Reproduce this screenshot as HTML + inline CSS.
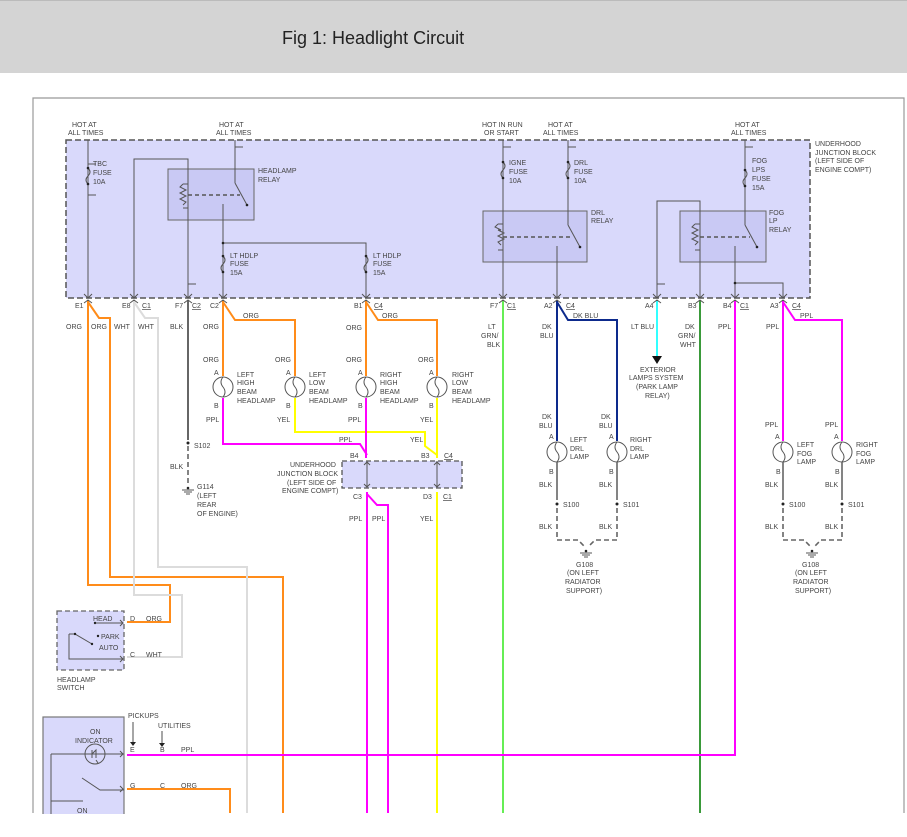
<!DOCTYPE html>
<html><head><meta charset="utf-8"><style>
html,body{margin:0;padding:0;background:#fff;width:907px;height:837px;overflow:hidden}
#hdr{position:absolute;left:0;top:0;width:907px;height:73px;background:#d4d4d4;border-top:1px solid #bbb;box-sizing:border-box}
#hdr span{position:absolute;left:282px;top:27px;font:18px "Liberation Sans",sans-serif;color:#222}
svg{position:absolute;left:0;top:0}
text{font-family:"Liberation Sans",sans-serif;font-size:7px;fill:#444}
</style></head><body>
<div id="hdr"><span>Fig 1: Headlight Circuit</span></div>
<svg width="907" height="837" viewBox="0 0 907 837">
<!-- outer frame -->
<polyline points="33,813 33,98 904,98 904,813" fill="none" stroke="#999" stroke-width="1.2"/>
<!-- underhood block -->
<rect x="66" y="140" width="744" height="158" fill="#d9d9fb" stroke="#555" stroke-width="1.5" stroke-dasharray="6,3"/>
<!-- relay boxes -->
<rect x="168" y="169" width="86" height="51" fill="#c9c9f4" stroke="#666"/>
<rect x="483" y="211" width="104" height="51" fill="#c9c9f4" stroke="#666"/>
<rect x="680" y="211" width="86" height="51" fill="#c9c9f4" stroke="#666"/>

<g stroke="#555" stroke-width="1" fill="none">
<!-- TBC -->
<line x1="88" y1="140" x2="88" y2="298"/>
<path d="M88,164 h8 M88,195 h8"/>
<path d="M88,168 q4,4 0,8 q-4,4 0,8"/>
<!-- E8 -->
<polyline points="134,298 134,159 188,159 188,169"/>
<!-- headlamp relay -->
<line x1="188" y1="169" x2="188" y2="298"/>
<line x1="235" y1="140" x2="235" y2="169"/><path d="M235,147 h8"/>
<line x1="235" y1="169" x2="235" y2="183"/><line x1="235" y1="183" x2="247" y2="205"/>
<path d="M183,184 l-3,3 l6,3 l-6,3 l6,3 l-6,3 l6,3 l-3,3 M183,184 h5 M183,208 h5 M188,184 v24"/>
<line x1="188" y1="195" x2="240" y2="195" stroke-dasharray="4,3" stroke-width="1.4"/>
<polyline points="223,204 223,243 366,243 366,298"/>
<line x1="223" y1="243" x2="223" y2="298"/>
<path d="M223,256 q4,4 0,8 q-4,4 0,8 M366,256 q4,4 0,8 q-4,4 0,8"/>
<path d="M188,284 h8"/>
<!-- DRL/IGNE -->
<line x1="503" y1="140" x2="503" y2="298"/><path d="M503,147 h8"/>
<path d="M503,162 q4,4 0,8 q-4,4 0,8"/>
<line x1="568" y1="140" x2="568" y2="225"/><path d="M568,147 h8"/>
<path d="M568,162 q4,4 0,8 q-4,4 0,8"/>
<line x1="568" y1="225" x2="580" y2="247"/>
<path d="M498,224 l-3,3 l6,3 l-3,0 l6,3 l-6,3 l6,3 l-6,3 l3,3 M498,224 h5 M498,250 h5"/>
<line x1="503" y1="237" x2="573" y2="237" stroke-dasharray="4,3" stroke-width="1.4"/>
<line x1="557" y1="246" x2="557" y2="298"/>
<!-- fog -->
<polyline points="657,298 657,201 700,201 700,298"/><path d="M657,284 h8"/>
<line x1="745" y1="140" x2="745" y2="225"/><path d="M745,147 h8"/>
<path d="M745,170 q4,4 0,8 q-4,4 0,8"/>
<line x1="745" y1="225" x2="757" y2="247"/>
<path d="M695,224 l-3,3 l6,3 l-6,3 l6,3 l-6,3 l6,3 l-3,3 M695,224 h5 M695,250 h5"/>
<line x1="700" y1="237" x2="750" y2="237" stroke-dasharray="4,3" stroke-width="1.4"/>
<polyline points="735,246 735,283 783,283 783,298"/><line x1="735" y1="283" x2="735" y2="298"/>
</g>
<g fill="#222">
<circle cx="88" cy="168" r="1.3"/><circle cx="88" cy="184" r="1.3"/>
<circle cx="223" cy="243" r="1.3"/><circle cx="223" cy="256" r="1.3"/><circle cx="223" cy="272" r="1.3"/>
<circle cx="366" cy="256" r="1.3"/><circle cx="366" cy="272" r="1.3"/>
<circle cx="503" cy="162" r="1.3"/><circle cx="503" cy="178" r="1.3"/><circle cx="568" cy="162" r="1.3"/><circle cx="568" cy="178" r="1.3"/>
<circle cx="745" cy="170" r="1.3"/><circle cx="745" cy="186" r="1.3"/><circle cx="735" cy="283" r="1.3"/>
<circle cx="247" cy="205" r="1.3"/><circle cx="580" cy="247" r="1.3"/><circle cx="757" cy="247" r="1.3"/>
</g>

<!-- colored wires -->
<g fill="none" stroke-width="2">
<polyline stroke="#ff8c1a" points="88,300 88,585 170,585 170,622 127,622"/>
<polyline stroke="#ff8c1a" points="88,302 99,318 110,318 110,577 283,577 283,813"/>
<polyline stroke="#dcdcdc" points="134,300 134,595 182,595 182,657 127,657"/>
<polyline stroke="#dcdcdc" points="134,302 145,318 158,318 158,567 247,567 247,813"/>
<line stroke="#666" x1="188" y1="300" x2="188" y2="440"/>
<polyline stroke="#ff8c1a" points="223,300 223,376"/>
<polyline stroke="#ff8c1a" points="223,302 235,320 295,320 295,376"/>
<polyline stroke="#ff8c1a" points="366,300 366,376"/>
<polyline stroke="#ff8c1a" points="366,302 378,320 437,320 437,376"/>
<polyline stroke="#ff00ff" points="223,398 223,444 360,444 367,455"/>
<polyline stroke="#ffff00" points="295,398 295,432 425,432 425,446 437,455"/>
<line stroke="#ff00ff" x1="366" y1="398" x2="366" y2="458"/>
<line stroke="#ffff00" x1="437" y1="398" x2="437" y2="458"/>
<line stroke="#ff00ff" x1="367" y1="492" x2="367" y2="813"/>
<polyline stroke="#ff00ff" points="367,494 377,505 388,505 388,813"/>
<line stroke="#ffff00" x1="437" y1="492" x2="437" y2="813"/>
<line stroke="#66ee55" x1="503" y1="300" x2="503" y2="813"/>
<line stroke="#0d2a8c" x1="557" y1="300" x2="557" y2="441"/>
<polyline stroke="#0d2a8c" points="557,302 568,320 617,320 617,441"/>
<line stroke="#33ffff" x1="657" y1="300" x2="657" y2="356"/>
<line stroke="#3a9a3a" x1="700" y1="300" x2="700" y2="813"/>
<polyline stroke="#ff00ff" points="735,300 735,755 127,755"/>
<line stroke="#ff00ff" x1="783" y1="300" x2="783" y2="441"/>
<polyline stroke="#ff00ff" points="783,302 795,320 842,320 842,441"/>
<polyline stroke="#ff8c1a" points="127,789 230,789 230,813"/>
</g>
<polygon points="652,356 662,356 657,364" fill="#111"/>

<!-- connector dashes bottom of block -->
<g fill="none" stroke="#555" stroke-width="1">
<path d="M84,294 l4,4 l4,-4 M130,294 l4,4 l4,-4 M184,294 l4,4 l4,-4 M219,294 l4,4 l4,-4 M362,294 l4,4 l4,-4 M499,294 l4,4 l4,-4 M553,294 l4,4 l4,-4 M653,294 l4,4 l4,-4 M696,294 l4,4 l4,-4 M731,294 l4,4 l4,-4 M779,294 l4,4 l4,-4"/>
<path d="M84,303 l4,-3 l4,3 M130,303 l4,-3 l4,3 M184,303 l4,-3 l4,3 M219,303 l4,-3 l4,3 M362,303 l4,-3 l4,3 M499,303 l4,-3 l4,3 M553,303 l4,-3 l4,3 M653,303 l4,-3 l4,3 M696,303 l4,-3 l4,3 M731,303 l4,-3 l4,3 M779,303 l4,-3 l4,3"/>
</g>

<!-- lamps -->
<g fill="none" stroke="#555" stroke-width="1">
<circle cx="223" cy="387" r="10"/><circle cx="295" cy="387" r="10"/><circle cx="366" cy="387" r="10"/><circle cx="437" cy="387" r="10"/>
<circle cx="557" cy="452" r="10"/><circle cx="617" cy="452" r="10"/><circle cx="783" cy="452" r="10"/><circle cx="842" cy="452" r="10"/>
<path d="M223,377 q-4,5 0,10 q4,5 0,10 M295,377 q-4,5 0,10 q4,5 0,10 M366,377 q-4,5 0,10 q4,5 0,10 M437,377 q-4,5 0,10 q4,5 0,10"/>
<path d="M557,442 q-4,5 0,10 q4,5 0,10 M617,442 q-4,5 0,10 q4,5 0,10 M783,442 q-4,5 0,10 q4,5 0,10 M842,442 q-4,5 0,10 q4,5 0,10"/>
</g>
<g stroke="#666" stroke-width="1.6" fill="none">
<line x1="557" y1="462" x2="557" y2="500"/><line x1="617" y1="462" x2="617" y2="500"/>
<line x1="783" y1="462" x2="783" y2="500"/><line x1="842" y1="462" x2="842" y2="500"/>
<g stroke-dasharray="5,3"><polyline points="557,508 557,540 578,540 585,547"/><polyline points="617,508 617,540 595,540 588,547"/>
<polyline points="783,508 783,540 804,540 811,547"/><polyline points="842,508 842,540 821,540 814,547"/>
<line x1="188" y1="446" x2="188" y2="484"/></g>
</g>
<g fill="#222"><circle cx="557" cy="504" r="1.5"/><circle cx="617" cy="504" r="1.5"/><circle cx="783" cy="504" r="1.5"/><circle cx="842" cy="504" r="1.5"/><circle cx="188" cy="443" r="1.5"/><circle cx="586" cy="551" r="1.3"/><circle cx="812" cy="551" r="1.3"/><circle cx="188" cy="488" r="1.3"/></g>
<g stroke="#555" stroke-width="1"><path d="M580,553 h12 M582,555 h8 M584,557 h4 M806,553 h12 M808,555 h8 M810,557 h4 M182,490 h12 M184,492 h8 M186,494 h4"/></g>

<!-- small junction block -->
<rect x="342" y="461" width="120" height="27" fill="#d9d9fb" stroke="#555" stroke-width="1.3" stroke-dasharray="5,3"/>
<path d="M367,461 v27 M437,461 v27 M364,465 l3,-3 l3,3 M364,484 l3,3 l3,-3 M434,465 l3,-3 l3,3 M434,484 l3,3 l3,-3" stroke="#555" fill="none"/>

<!-- headlamp switch -->
<rect x="57" y="611" width="67" height="59" fill="#d9d9fb" stroke="#666" stroke-width="1.3" stroke-dasharray="5,3"/>
<g stroke="#555" fill="none"><path d="M95,623 h28 M69,634 v25 h54 M69,634 h6 l17,10"/><path d="M120,620 l3,3 l-3,3 M120,656 l3,3 l-3,3"/></g>
<g fill="#222"><circle cx="95" cy="623" r="1.2"/><circle cx="75" cy="634" r="1.2"/><circle cx="92" cy="644" r="1.2"/><circle cx="98" cy="636" r="1.2"/></g>
<!-- bottom switch box -->
<rect x="43" y="717" width="81" height="100" fill="#d9d9fb" stroke="#777" stroke-width="1.2"/>
<g stroke="#555" fill="none"><circle cx="95" cy="754" r="10"/><path d="M51,754 h73 M51,754 v60 M51,801 h32 M82,778 l18,12 h24 M92,750 v8 M92,754 l4,-4 v8 M96,760 l2,3"/>
<path d="M120,751 l3,3 l-3,3 M120,786 l3,3 l-3,3"/>
<path d="M133,722 v20 M162,731 v12" stroke="#888" stroke-width="1.5"/></g>
<polygon points="130,742 136,742 133,746" fill="#222"/><polygon points="159,743 165,743 162,747" fill="#222"/>

<!-- text -->
<g>
<text x="72" y="127">HOT AT</text><text x="68" y="135">ALL TIMES</text>
<text x="219" y="127">HOT AT</text><text x="216" y="135">ALL TIMES</text>
<text x="482" y="127">HOT IN RUN</text><text x="484" y="135">OR START</text>
<text x="548" y="127">HOT AT</text><text x="543" y="135">ALL TIMES</text>
<text x="735" y="127">HOT AT</text><text x="731" y="135">ALL TIMES</text>
<text x="93" y="166">TBC</text><text x="93" y="175">FUSE</text><text x="93" y="184">10A</text>
<text x="258" y="173">HEADLAMP</text><text x="258" y="182">RELAY</text>
<text x="230" y="258">LT HDLP</text><text x="230" y="266">FUSE</text><text x="230" y="275">15A</text>
<text x="373" y="258">LT HDLP</text><text x="373" y="266">FUSE</text><text x="373" y="275">15A</text>
<text x="509" y="165">IGNE</text><text x="509" y="174">FUSE</text><text x="509" y="183">10A</text>
<text x="574" y="165">DRL</text><text x="574" y="174">FUSE</text><text x="574" y="183">10A</text>
<text x="591" y="215">DRL</text><text x="591" y="223">RELAY</text>
<text x="752" y="163">FOG</text><text x="752" y="172">LPS</text><text x="752" y="181">FUSE</text><text x="752" y="190">15A</text>
<text x="769" y="215">FOG</text><text x="769" y="223">LP</text><text x="769" y="232">RELAY</text>
<text x="815" y="146">UNDERHOOD</text><text x="815" y="155">JUNCTION BLOCK</text><text x="815" y="163">(LEFT SIDE OF</text><text x="815" y="172">ENGINE COMPT)</text>
<text x="75" y="308">E1</text><text x="122" y="308">E8</text><text x="142" y="308" text-decoration="underline">C1</text>
<text x="175" y="308">F7</text><text x="192" y="308" text-decoration="underline">C2</text><text x="210" y="308">C2</text>
<text x="354" y="308">B1</text><text x="374" y="308" text-decoration="underline">C4</text>
<text x="490" y="308">F7</text><text x="507" y="308" text-decoration="underline">C1</text>
<text x="544" y="308">A2</text><text x="566" y="308" text-decoration="underline">C4</text>
<text x="645" y="308">A4</text><text x="688" y="308">B3</text><text x="723" y="308">B4</text><text x="740" y="308" text-decoration="underline">C1</text>
<text x="770" y="308">A3</text><text x="792" y="308" text-decoration="underline">C4</text>
<text x="66" y="329">ORG</text><text x="91" y="329">ORG</text><text x="114" y="329">WHT</text><text x="138" y="329">WHT</text><text x="170" y="329">BLK</text>
<text x="203" y="329">ORG</text><text x="243" y="318">ORG</text><text x="346" y="330">ORG</text><text x="382" y="318">ORG</text>
<text x="488" y="329">LT</text><text x="481" y="338">GRN/</text><text x="487" y="347">BLK</text>
<text x="542" y="329">DK</text><text x="540" y="338">BLU</text><text x="573" y="318">DK BLU</text>
<text x="631" y="329">LT BLU</text><text x="685" y="329">DK</text><text x="678" y="338">GRN/</text><text x="680" y="347">WHT</text>
<text x="718" y="329">PPL</text><text x="766" y="329">PPL</text><text x="800" y="318">PPL</text>
<text x="203" y="362">ORG</text><text x="275" y="362">ORG</text><text x="346" y="362">ORG</text><text x="418" y="362">ORG</text>
<text x="214" y="375">A</text><text x="286" y="375">A</text><text x="358" y="375">A</text><text x="429" y="375">A</text>
<text x="214" y="408">B</text><text x="286" y="408">B</text><text x="358" y="408">B</text><text x="429" y="408">B</text>
<text x="237" y="377">LEFT</text><text x="237" y="385">HIGH</text><text x="237" y="394">BEAM</text><text x="237" y="403">HEADLAMP</text>
<text x="309" y="377">LEFT</text><text x="309" y="385">LOW</text><text x="309" y="394">BEAM</text><text x="309" y="403">HEADLAMP</text>
<text x="380" y="377">RIGHT</text><text x="380" y="385">HIGH</text><text x="380" y="394">BEAM</text><text x="380" y="403">HEADLAMP</text>
<text x="452" y="377">RIGHT</text><text x="452" y="385">LOW</text><text x="452" y="394">BEAM</text><text x="452" y="403">HEADLAMP</text>
<text x="206" y="422">PPL</text><text x="277" y="422">YEL</text><text x="348" y="422">PPL</text><text x="420" y="422">YEL</text>
<text x="339" y="442">PPL</text><text x="410" y="442">YEL</text>
<text x="194" y="448">S102</text><text x="170" y="469">BLK</text>
<text x="197" y="489">G114</text><text x="197" y="498">(LEFT</text><text x="197" y="507">REAR</text><text x="197" y="516">OF ENGINE)</text>
<text x="350" y="458">B4</text><text x="421" y="458">B3</text><text x="444" y="458" text-decoration="underline">C4</text>
<text x="290" y="467">UNDERHOOD</text><text x="277" y="476">JUNCTION BLOCK</text><text x="287" y="485">(LEFT SIDE OF</text><text x="282" y="493">ENGINE COMPT)</text>
<text x="353" y="499">C3</text><text x="423" y="499">D3</text><text x="443" y="499" text-decoration="underline">C1</text>
<text x="349" y="521">PPL</text><text x="372" y="521">PPL</text><text x="420" y="521">YEL</text>
<text x="640" y="372">EXTERIOR</text><text x="629" y="380">LAMPS SYSTEM</text><text x="636" y="389">(PARK LAMP</text><text x="645" y="398">RELAY)</text>
<text x="542" y="419">DK</text><text x="539" y="428">BLU</text><text x="601" y="419">DK</text><text x="599" y="428">BLU</text>
<text x="549" y="439">A</text><text x="609" y="439">A</text><text x="549" y="474">B</text><text x="609" y="474">B</text>
<text x="570" y="442">LEFT</text><text x="570" y="451">DRL</text><text x="570" y="459">LAMP</text>
<text x="630" y="442">RIGHT</text><text x="630" y="451">DRL</text><text x="630" y="459">LAMP</text>
<text x="539" y="487">BLK</text><text x="599" y="487">BLK</text>
<text x="563" y="507">S100</text><text x="623" y="507">S101</text>
<text x="539" y="529">BLK</text><text x="599" y="529">BLK</text>
<text x="576" y="567">G108</text><text x="567" y="575">(ON LEFT</text><text x="565" y="584">RADIATOR</text><text x="566" y="593">SUPPORT)</text>
<text x="765" y="427">PPL</text><text x="825" y="427">PPL</text>
<text x="775" y="439">A</text><text x="834" y="439">A</text><text x="776" y="474">B</text><text x="835" y="474">B</text>
<text x="797" y="447">LEFT</text><text x="797" y="456">FOG</text><text x="797" y="464">LAMP</text>
<text x="856" y="447">RIGHT</text><text x="856" y="456">FOG</text><text x="856" y="464">LAMP</text>
<text x="765" y="487">BLK</text><text x="825" y="487">BLK</text>
<text x="789" y="507">S100</text><text x="848" y="507">S101</text>
<text x="765" y="529">BLK</text><text x="825" y="529">BLK</text>
<text x="802" y="567">G108</text><text x="795" y="575">(ON LEFT</text><text x="793" y="584">RADIATOR</text><text x="795" y="593">SUPPORT)</text>
<text x="93" y="621">HEAD</text><text x="101" y="639">PARK</text><text x="99" y="650">AUTO</text>
<text x="130" y="621">D</text><text x="146" y="621">ORG</text><text x="130" y="657">C</text><text x="146" y="657">WHT</text>
<text x="57" y="682">HEADLAMP</text><text x="57" y="690">SWITCH</text>
<text x="128" y="718">PICKUPS</text><text x="158" y="728">UTILITIES</text>
<text x="90" y="734">ON</text><text x="75" y="743">INDICATOR</text>
<text x="130" y="752">E</text><text x="160" y="752">B</text><text x="181" y="752">PPL</text>
<text x="130" y="788">G</text><text x="160" y="788">C</text><text x="181" y="788">ORG</text>
<text x="77" y="813">ON</text>
</g>
<rect x="0" y="814" width="907" height="23" fill="#fff"/>
</svg>
</body></html>
